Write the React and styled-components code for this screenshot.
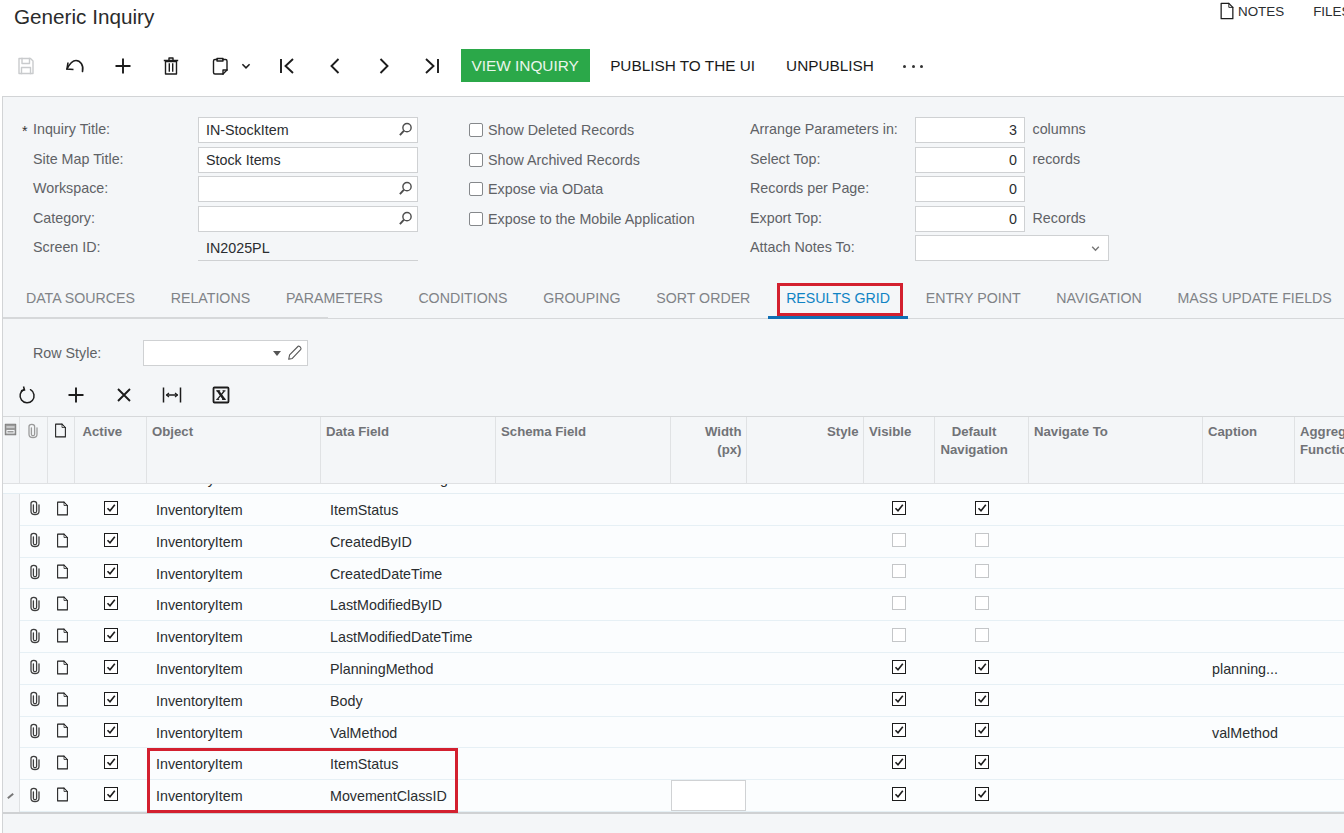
import React from "react";
import styled, { createGlobalStyle } from "styled-components";

const GlobalStyle = createGlobalStyle`
  html, body {
    margin: 0;
    padding: 0;
    background: #fff;
    overflow: hidden;
  }
  * {
    box-sizing: border-box;
  }
`;

// Icons
const Svg = ({ size = 20, color = "#1c1c1c", width = 1.5, children }) => (
  <svg
    width={size}
    height={size}
    viewBox="0 0 20 20"
    fill="none"
    stroke={color}
    strokeWidth={width}
    strokeLinecap="square"
    strokeLinejoin="round"
  >
    {children}
  </svg>
);

const SaveIcon = () => (
  <Svg color="#c9cbcd" width={1.4}>
    <path d="M3 2.5h11.5L17 5v12.5H3z" />
    <path d="M6 2.5v5h7.5v-5M5.5 17.500v-6h9v6" />
  </Svg>
);
const UndoIcon = () => (
  <Svg width={1.6}>
    <path d="M2 13C5 7 8 4.500 11 4.500c4 0 8 4.500 6.500 11" strokeLinecap="round" />
    <path d="M3 6.500 2 13l6.500.5" strokeLinecap="butt" strokeLinejoin="miter" />
  </Svg>
);
const PlusIcon = () => (
  <Svg width={1.9}>
    <path d="M10 2.500v15M2.500 10h15" strokeLinecap="butt" />
  </Svg>
);
const TrashIcon = () => (
  <Svg width={1.4}>
    <path d="M4.500 5.500h11V18h-11zM3.500 4.500h13M8 4V2h4v2M8.300 8v7M11.700 8v7" />
  </Svg>
);
const PasteIcon = () => (
  <Svg width={1.4}>
    <path d="M7 3.500H5a1.500 1.500 0 0 0-1.500 1.500v11.500A1.500 1.500 0 0 0 5 18h8l4-4V5a1.500 1.500 0 0 0-1.500-1.500H13" />
    <path d="M7 5V2.500h6V5zM13 18v-4h4" />
  </Svg>
);
const ChevronDown = ({ size = 12, color = "#1c1c1c" }) => (
  <Svg size={size} color={color} width={2.6}>
    <path d="M4 7l6 6 6-6" strokeLinecap="butt" strokeLinejoin="miter" />
  </Svg>
);
const FirstIcon = () => (
  <Svg width={1.9}>
    <path d="M4 3v14M16 3 8.500 10l7.500 7" strokeLinecap="butt" strokeLinejoin="miter" />
  </Svg>
);
const PrevIcon = () => (
  <Svg width={1.9}>
    <path d="M13.500 3 6.500 10l7 7" strokeLinecap="butt" strokeLinejoin="miter" />
  </Svg>
);
const NextIcon = () => (
  <Svg width={1.9}>
    <path d="M6.500 3l7 7-7 7" strokeLinecap="butt" strokeLinejoin="miter" />
  </Svg>
);
const LastIcon = () => (
  <Svg width={1.9}>
    <path d="M16 3v14M4 3l7.500 7L4 17" strokeLinecap="butt" strokeLinejoin="miter" />
  </Svg>
);
const SearchIcon = () => (
  <Svg size={15} color="#4e4e4e" width={1.9}>
    <circle cx="12" cy="7.500" r="5.500" />
    <path d="M8 11.500 2.500 17.500" strokeWidth={2.6} strokeLinecap="butt" />
  </Svg>
);
const PencilIcon = () => (
  <Svg size={18} color="#555" width={1.2}>
    <path d="M3 17l1-5L13.500 2.500c1-1 4 2 3 3.500L7 16z" />
  </Svg>
);
const RefreshIcon = () => (
  <Svg>
    <path d="M7 4.500a7 7 0 1 0 6.500.2" strokeLinecap="round" />
    <path d="M6.500 1.500 7.500 5l-3.500.8" strokeLinecap="butt" strokeLinejoin="miter" />
  </Svg>
);
const CloseIcon = () => (
  <Svg width={1.9}>
    <path d="M4 4l12 12M16 4 4 16" strokeLinecap="butt" />
  </Svg>
);
const FitIcon = () => (
  <Svg width={1.5}>
    <path d="M1.500 2.500v15M18.500 2.500v15M4.500 10h11" strokeLinecap="butt" />
    <path d="M7 8l-2.500 2L7 12M13 8l2.500 2-2.500 2" strokeLinecap="butt" strokeWidth={1.2} />
  </Svg>
);
const ExcelIcon = () => (
  <Svg width={1.8}>
    <rect x="2.500" y="2.500" width="15" height="15" rx="1" />
    <path d="M6.300 6h1.500l6 8.200h-1.600z" fill="#1c1c1c" strokeWidth={1.2} />
    <path d="M13.300 6 6.500 14.200" strokeWidth={1.3} strokeLinecap="butt" />
    <path d="M5.200 5.800h4M11.500 5.800h3M5.200 14.400h3M11 14.400h3.800" strokeWidth={1} strokeLinecap="butt" />
  </Svg>
);
const ClipIcon = ({ color = "#3e3e3e" }) => (
  <Svg size={16} color={color} width={1.6}>
    <path
      d="M8 6v8c0 2.500 4 2.500 4 0V4.500C12 .8 5 .8 5 4.500V14c0 5.500 10 5.500 10 0V6"
      strokeLinecap="round"
    />
  </Svg>
);
const NoteIcon = ({ size = 15, color = "#1c1c1c" }) => (
  <Svg size={size} color={color} width={1.4}>
    <path d="M3.500 1.500h8.500l4.500 4.500v12.500h-13z" />
    <path d="M12 1.500V6h4.500" strokeWidth={1} />
  </Svg>
);
const ArchiveIcon = () => (
  <Svg size={13} color="#7d7d7d" width={1.6}>
    <rect x="2" y="2" width="16" height="16" fill="#9a9a9a" />
    <path d="M4.500 6h11M4.500 11.500h11v4h-11z" stroke="#f4f6f8" />
  </Svg>
);

// Data
const rows = [
  { field: "ItemStatus", visible: true, nav: true },
  { field: "CreatedByID" },
  { field: "CreatedDateTime" },
  { field: "LastModifiedByID" },
  { field: "LastModifiedDateTime" },
  { field: "PlanningMethod", visible: true, nav: true, caption: "planning..." },
  { field: "Body", visible: true, nav: true },
  { field: "ValMethod", visible: true, nav: true, caption: "valMethod" },
  { field: "ItemStatus", visible: true, nav: true },
  { field: "MovementClassID", visible: true, nav: true, editing: true },
];

const tabs = [
  "DATA SOURCES",
  "RELATIONS",
  "PARAMETERS",
  "CONDITIONS",
  "GROUPING",
  "SORT ORDER",
  "RESULTS GRID",
  "ENTRY POINT",
  "NAVIGATION",
  "MASS UPDATE FIELDS",
];

const Check = ({ on }) => (
  <CheckBox $on={on}>
    {on && (
      <svg width="10" height="10" viewBox="0 0 10 10" fill="none" stroke="#1c1c1c" strokeWidth="1.600">
        <path d="M1.500 5.200 4 7.800l4.800-6" />
      </svg>
    )}
  </CheckBox>
);

const App = () => {
  return (
    <Page>
      <GlobalStyle />
      <Header>
        <Title>Generic Inquiry</Title>
        <HeaderLinks>
          <HeaderLink>
            <NoteIcon size={18} />
            NOTES
          </HeaderLink>
          <HeaderLink>FILES</HeaderLink>
        </HeaderLinks>
      </Header>

      <Toolbar>
        <IconButton><SaveIcon /></IconButton>
        <IconButton><UndoIcon /></IconButton>
        <IconButton><PlusIcon /></IconButton>
        <IconButton><TrashIcon /></IconButton>
        <PasteButton>
          <PasteIcon />
          <ChevronDown />
        </PasteButton>
        <IconButton><FirstIcon /></IconButton>
        <IconButton><PrevIcon /></IconButton>
        <IconButton><NextIcon /></IconButton>
        <IconButton><LastIcon /></IconButton>
        <PrimaryButton>VIEW INQUIRY</PrimaryButton>
        <TextButton>PUBLISH TO THE UI</TextButton>
        <TextButton>UNPUBLISH</TextButton>
        <MoreDots>
          <i />
          <i />
          <i />
        </MoreDots>
      </Toolbar>

      <Panel>
        <Form>
          <MainColumn>
            <FieldRow>
              <Star>*</Star>
              <Label>Inquiry Title:</Label>
              <Input>IN-StockItem<SearchSlot><SearchIcon /></SearchSlot></Input>
            </FieldRow>
            <FieldRow>
              <Star />
              <Label>Site Map Title:</Label>
              <Input>Stock Items</Input>
            </FieldRow>
            <FieldRow>
              <Star />
              <Label>Workspace:</Label>
              <Input><SearchSlot><SearchIcon /></SearchSlot></Input>
            </FieldRow>
            <FieldRow>
              <Star />
              <Label>Category:</Label>
              <Input><SearchSlot><SearchIcon /></SearchSlot></Input>
            </FieldRow>
            <FieldRow>
              <Star />
              <Label>Screen ID:</Label>
              <ReadOnly>IN2025PL</ReadOnly>
            </FieldRow>
          </MainColumn>

          <OptionColumn>
            {[
              "Show Deleted Records",
              "Show Archived Records",
              "Expose via OData",
              "Expose to the Mobile Application",
            ].map((text) => (
              <Option key={text}>
                <OptionBox />
                {text}
              </Option>
            ))}
          </OptionColumn>

          <ParamColumn>
            <ParamRow>
              <Label>Arrange Parameters in:</Label>
              <NumberInput>3</NumberInput>
              <Unit>columns</Unit>
            </ParamRow>
            <ParamRow>
              <Label>Select Top:</Label>
              <NumberInput>0</NumberInput>
              <Unit>records</Unit>
            </ParamRow>
            <ParamRow>
              <Label>Records per Page:</Label>
              <NumberInput>0</NumberInput>
            </ParamRow>
            <ParamRow>
              <Label>Export Top:</Label>
              <NumberInput>0</NumberInput>
              <Unit>Records</Unit>
            </ParamRow>
            <ParamRow>
              <Label>Attach Notes To:</Label>
              <SelectInput>
                <ChevronDown size={11} color="#777" />
              </SelectInput>
            </ParamRow>
          </ParamColumn>
        </Form>

        <TabBar>
          {tabs.map((tab) => (
            <Tab key={tab} $active={tab === "RESULTS GRID"}>
              {tab}
              {tab === "RESULTS GRID" && <TabHighlight />}
            </Tab>
          ))}
        </TabBar>

        <StyleRow>
          <StyleLabel>Row Style:</StyleLabel>
          <StyleInput>
            <Caret />
            <PencilIcon />
          </StyleInput>
        </StyleRow>

        <GridToolbar>
          <IconButton><RefreshIcon /></IconButton>
          <IconButton><PlusIcon /></IconButton>
          <IconButton><CloseIcon /></IconButton>
          <IconButton><FitIcon /></IconButton>
          <IconButton><ExcelIcon /></IconButton>
        </GridToolbar>

        <Grid>
          <HeadRow>
            <HeadCell $center><ArchiveIcon /></HeadCell>
            <HeadCell $center><ClipIcon color="#9a9a9a" /></HeadCell>
            <HeadCell $center><NoteIcon /></HeadCell>
            <HeadCell $indent={8}>Active</HeadCell>
            <HeadCell>Object</HeadCell>
            <HeadCell>Data Field</HeadCell>
            <HeadCell>Schema Field</HeadCell>
            <HeadCell $right>Width<br />(px)</HeadCell>
            <HeadCell $right>Style</HeadCell>
            <HeadCell>Visible</HeadCell>
            <NavHead>Default<br />Navigation</NavHead>
            <HeadCell>Navigate To</HeadCell>
            <HeadCell>Caption</HeadCell>
            <HeadCell>Aggregate<br />Function</HeadCell>
          </HeadRow>

          <ScrolledRow>
            <Cell />
            <Cell />
            <Cell />
            <Cell />
            <ScrolledText>InventoryItem</ScrolledText>
            <ScrolledText>ItemClassTracking</ScrolledText>
          </ScrolledRow>

          {rows.map((row, i) => (
            <Row key={i}>
              <MarkerCell>{row.editing && <PencilMark />}</MarkerCell>
              <IconCell><ClipIcon /></IconCell>
              <IconCell><NoteIcon /></IconCell>
              <CheckCell><Check on /></CheckCell>
              <Cell>InventoryItem</Cell>
              <Cell>{row.field}</Cell>
              <Cell />
              <Cell>{row.editing && <WidthEditor />}</Cell>
              <Cell />
              <CheckCell><Check on={row.visible} /></CheckCell>
              <CheckCell><Check on={row.nav} /></CheckCell>
              <Cell />
              <Cell>{row.caption}</Cell>
              <Cell />
            </Row>
          ))}
          <RowHighlight />
        </Grid>
      </Panel>
    </Page>
  );
};

const columns = "16.5px 28px 27px 72px 174px 175px 175px 76px 117px 71px 94px 174px 92px 61px";

const Page = styled.div`
  width: 1344px;
  height: 833px;
  overflow: hidden;
  background: #fff;
  font-family: "Liberation Sans", Arial, sans-serif;
  font-size: 14.300px;
  color: #2a2d30;
`;

const Header = styled.header`
  display: flex;
  justify-content: space-between;
  height: 49px;
`;

const Title = styled.h1`
  margin: 5px 0 0 14px;
  font-size: 20.700px;
  line-height: 24px;
  font-weight: 400;
  color: #2b2b2b;
`;

const HeaderLinks = styled.div`
  display: flex;
  gap: 29px;
  width: 126px;
  flex: none;
  white-space: nowrap;
`;

const HeaderLink = styled.div`
  display: flex;
  align-items: center;
  gap: 2px;
  height: 22px;
  font-size: 13.400px;
`;

const Toolbar = styled.div`
  display: flex;
  align-items: center;
  height: 33px;
  padding-left: 2px;
`;

const IconButton = styled.div`
  display: flex;
  align-items: center;
  justify-content: center;
  width: 48.400px;
  height: 33px;
  flex: none;
`;

const PasteButton = styled.div`
  display: flex;
  align-items: center;
  gap: 10px;
  width: 67px;
  padding-left: 14px;
  flex: none;
`;

const PrimaryButton = styled.div`
  display: flex;
  align-items: center;
  justify-content: center;
  width: 129px;
  height: 33px;
  margin-left: 4.500px;
  background: #2ba849;
  color: #eaf6ec;
  font-size: 15.400px;
`;

const TextButton = styled.div`
  display: flex;
  align-items: center;
  height: 33px;
  padding: 0 10.500px;
  margin-left: 10px;
  font-size: 15.350px;
  color: #1a1a1a;
`;

const MoreDots = styled.div`
  display: flex;
  gap: 5.500px;
  margin: 2px 0 0 19px;
  i {
    width: 3px;
    height: 3px;
    border-radius: 50%;
    background: #333;
  }
`;

const Panel = styled.main`
  position: relative;
  height: 737px;
  margin: 14px 0 0 2px;
  border-top: 1px solid #d2d4d6;
  border-left: 1px solid #d2d4d6;
  background: #f4f6f8;
`;

const Form = styled.section`
  display: flex;
  height: 183px;
  padding-top: 20px;
`;

const MainColumn = styled.div`
  display: grid;
  grid-auto-rows: 29.600px;
  width: 466px;
  padding-left: 19px;
  flex: none;
`;

const FieldRow = styled.div`
  display: grid;
  grid-template-columns: 11px 165px 220px;
  align-items: start;
`;

const Star = styled.span`
  padding-top: 5px;
  line-height: 18px;
  color: #333;
`;

const Label = styled.span`
  padding-top: 3px;
  line-height: 18px;
  color: #5f6266;
  white-space: nowrap;
`;

const Input = styled.div`
  position: relative;
  height: 26px;
  padding: 0 7px;
  border: 1px solid #cfd1d3;
  background: #fff;
  line-height: 24px;
  color: #2a2d30;
`;

const SearchSlot = styled.span`
  position: absolute;
  top: 4px;
  right: 4px;
  display: flex;
`;

const ReadOnly = styled.div`
  height: 26px;
  padding: 0 8px;
  border-bottom: 1px solid #cfd1d3;
  line-height: 27px;
`;

const OptionColumn = styled.div`
  display: grid;
  grid-auto-rows: 29.600px;
  width: 281px;
  flex: none;
`;

const Option = styled.label`
  display: flex;
  align-items: center;
  gap: 5px;
  height: 26px;
  color: #5f6266;
  white-space: nowrap;
`;

const OptionBox = styled.span`
  width: 14px;
  height: 14px;
  border: 1px solid #85888b;
  border-radius: 2px;
  background: #fff;
  flex: none;
`;

const ParamColumn = styled.div`
  display: grid;
  grid-auto-rows: 29.600px;
`;

const ParamRow = styled.div`
  display: grid;
  grid-template-columns: 165px max-content max-content;
  align-items: start;
`;

const NumberInput = styled(Input)`
  width: 110px;
  text-align: right;
`;

const Unit = styled.span`
  margin-left: 7.500px;
  padding-top: 3px;
  line-height: 18px;
  color: #5f6266;
`;

const SelectInput = styled(Input)`
  display: flex;
  align-items: center;
  justify-content: flex-end;
  width: 194px;
  padding-right: 7px;
`;

const TabBar = styled.nav`
  position: relative;
  display: flex;
  height: 39px;
  padding-left: 5px;
  border-bottom: 1px solid #d6d8da;
  &::before {
    content: "";
    position: absolute;
    left: 0;
    bottom: -1px;
    width: 325px;
    height: 2px;
    background: #d6d8da;
  }
`;

const Tab = styled.div`
  position: relative;
  z-index: 1;
  height: 39px;
  padding: 0 17.900px;
  font-size: 14.200px;
  line-height: 36px;
  white-space: nowrap;
  color: ${(p) => (p.$active ? "#0f83c4" : "#808387")};
  border-bottom: ${(p) => (p.$active ? "3px solid #0f6fb5" : "none")};
`;

const TabHighlight = styled.span`
  position: absolute;
  left: 9px;
  top: 3px;
  width: 126px;
  height: 33px;
  border: 3px solid #d3202f;
`;

const StyleRow = styled.div`
  display: flex;
  align-items: center;
  height: 26px;
  margin-top: 21px;
  padding-left: 30px;
`;

const StyleLabel = styled.span`
  width: 110px;
  color: #5f6266;
`;

const StyleInput = styled.div`
  display: flex;
  align-items: center;
  justify-content: flex-end;
  gap: 5px;
  width: 165px;
  height: 26px;
  padding-right: 3px;
  border: 1px solid #cfd1d3;
  background: #fff;
`;

const Caret = styled.span`
  width: 0;
  height: 0;
  border-left: 4.500px solid transparent;
  border-right: 4.500px solid transparent;
  border-top: 5px solid #555;
`;

const GridToolbar = styled.div`
  display: flex;
  align-items: center;
  height: 33px;
  margin-top: 12px;
`;

const Grid = styled.div`
  position: relative;
  margin-top: 5px;
  border-bottom: 2px solid #cfd1d3;
`;

const HeadRow = styled.div`
  display: grid;
  grid-template-columns: ${columns};
  height: 68px;
  border-top: 1px solid #d6d8da;
  border-bottom: 1px solid #dfe1e3;
`;

const HeadCell = styled.div`
  display: ${(p) => (p.$center ? "flex" : "block")};
  justify-content: center;
  padding: ${(p) => (p.$center ? "6px 0 0" : `6px 4px 0 ${p.$indent || 5.5}px`)};
  border-right: 1px solid #e0e2e4;
  font-size: 13.200px;
  font-weight: 700;
  line-height: 18px;
  color: #717377;
  text-align: ${(p) => (p.$right ? "right" : "left")};
  white-space: nowrap;
  overflow: hidden;
`;

const NavHead = styled(HeadCell)`
  padding: 6px 20px 0 6px;
  text-align: center;
`;

const ScrolledRow = styled.div`
  display: grid;
  grid-template-columns: ${columns};
  height: 10px;
  overflow: hidden;
  border-bottom: 1px solid #e4eef3;
  background: #fbfdfe;
`;

const ScrolledText = styled.div`
  margin-top: -21px;
  padding-left: 9.500px;
  line-height: 32px;
  white-space: nowrap;
`;

const Row = styled.div`
  display: grid;
  grid-template-columns: ${columns};
  height: 31.800px;
  border-bottom: 1px solid #e6f0f5;
  background: #fbfdfe;
  &:last-of-type {
    border-bottom: none;
  }
`;

const Cell = styled.div`
  padding: 0 9.500px;
  line-height: 32px;
  white-space: nowrap;
  overflow: hidden;
`;

const MarkerCell = styled.div`
  display: flex;
  align-items: center;
  justify-content: center;
  margin-bottom: -1px;
  background: #f4f6f8;
  border-right: 1px solid #dfe1e3;
`;

const PencilMark = styled.span`
  width: 7px;
  height: 2px;
  background: #777;
  transform: rotate(-40deg);
`;

const IconCell = styled.div`
  display: flex;
  align-items: center;
  justify-content: center;
  padding: 0 0 2px 3px;
`;

const CheckCell = styled.div`
  display: flex;
  align-items: center;
  justify-content: center;
  padding-bottom: 3px;
`;

const CheckBox = styled.span`
  display: flex;
  align-items: center;
  justify-content: center;
  width: 14px;
  height: 14px;
  border: ${(p) => (p.$on ? "1.500px solid #1c1c1c" : "1px solid #c4c6c8")};
  background: #fff;
`;

const WidthEditor = styled.div`
  height: 31px;
  margin: 0 -9px 0 -9.500px;
  border: 1px solid #d0d2d4;
  background: #fff;
`;

const RowHighlight = styled.div`
  position: absolute;
  left: 144px;
  bottom: -1px;
  width: 311px;
  height: 65px;
  border: 3px solid #d3202f;
`;

export default App;
